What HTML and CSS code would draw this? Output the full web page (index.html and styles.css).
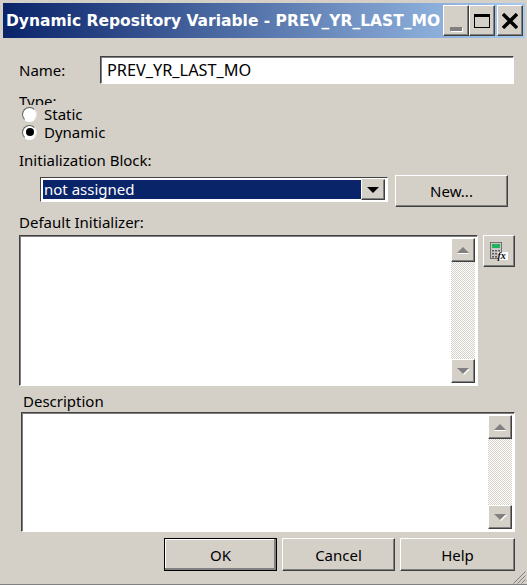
FILE: index.html
```html
<!DOCTYPE html>
<html lang="en">
<head>
  <meta charset="UTF-8" />
  <title>Dynamic Repository Variable</title>
  <link rel="stylesheet" href="styles.css">
</head>
<body>
  <div class="window">
    <div class="titlebar">
      <span class="title">Dynamic Repository Variable - PREV_YR_LAST_MO</span>
      <div class="win-buttons">
        <button class="win-btn"><span class="min-glyph"></span></button>
        <button class="win-btn"><span class="max-glyph"></span></button>
        <button class="win-btn win-close">
          <svg width="16" height="16" viewBox="0 0 16 16"><path d="M1 1 L15 15 M15 1 L1 15" stroke="#000" stroke-width="3.4" fill="none"/></svg>
        </button>
      </div>
    </div>

    <div class="content">
      <div class="name-row">
        <label for="varName">Name:</label>
        <input type="text" id="varName" class="name-input" value="PREV_YR_LAST_MO" />
      </div>

      <div class="type-label">Type:</div>
      <div class="radio-row"><span class="radio"></span>Static</div>
      <div class="radio-row"><span class="radio radio-on"></span>Dynamic</div>

      <div class="init-label">Initialization Block:</div>
      <div class="init-row">
        <div class="combo">
          <div class="combo-value">not assigned</div>
          <div class="combo-btn"><span class="combo-arrow"></span></div>
        </div>
        <button class="btn btn-new">New...</button>
      </div>

      <div class="default-label">Default Initializer:</div>
      <div class="default-row">
        <div class="textbox textbox-default">
          <div class="scrollbar">
            <div class="scroll-btn"><span class="arrow-up"></span></div>
            <div class="scroll-track"></div>
            <div class="scroll-btn"><span class="arrow-down"></span></div>
          </div>
        </div>
        <button class="btn btn-func">
          <svg width="20" height="20" viewBox="0 0 20 20">
            <rect x="1.500" y="1.500" width="11" height="16" fill="#c8c8c8" stroke="#707070"/>
            <rect x="3" y="3" width="8" height="4" fill="#22b35a"/>
            <path d="M3 9h2v1.500H3zM6 9h2v1.500H6zM9 9h2v1.500H9zM3 12h2v1.500H3zM6 12h2v1.500H6zM3 15h2v1.500H3zM6 15h2v1.500H6z" fill="#606060"/>
            <rect x="9" y="11" width="10" height="8" fill="#fff"/>
            <text x="8.500" y="17.500" class="fx-text">fx</text>
          </svg>
        </button>
      </div>

      <div class="desc-label">Description</div>
      <div class="textbox textbox-desc">
        <div class="scrollbar">
          <div class="scroll-btn"><span class="arrow-up"></span></div>
          <div class="scroll-track"></div>
          <div class="scroll-btn"><span class="arrow-down"></span></div>
        </div>
      </div>

      <div class="button-row">
        <button class="btn btn-ok">OK</button>
        <button class="btn btn-action">Cancel</button>
        <button class="btn btn-action btn-help">Help</button>
      </div>
    </div>

    <div class="statusline">
      <svg class="grip" width="14" height="14" viewBox="0 0 14 14">
        <path d="M13.500 1.500 L1.500 13.500 M13.500 5.500 L5.500 13.500 M13.500 9.500 L9.500 13.500" stroke="#808080" fill="none"/>
      </svg>
    </div>
  </div>
</body>
</html>
```

FILE: styles.css
```css
* {
  margin: 0;
  padding: 0;
  box-sizing: border-box;
  font-family: "Noto Sans", "Open Sans", sans-serif;
}

body {
  width: 527px;
  height: 585px;
  overflow: hidden;
  background-color: #d4d0c8;
  color: #000;
  font-size: 15px;
}

.window {
  display: flex;
  flex-direction: column;
  height: 585px;
  padding: 3px 2px 0 3px;
}

.titlebar {
  display: flex;
  justify-content: space-between;
  align-items: center;
  height: 35px;
  padding: 0 2px 0 3px;
  background: linear-gradient(to right, #0a246a, #a6caf0);
}

.title {
  font-family: "DejaVu Sans", sans-serif;
  font-weight: bold;
  font-size: 15.500px;
  color: #fff;
  white-space: nowrap;
}

.win-buttons {
  display: flex;
}

.win-btn {
  display: flex;
  align-items: center;
  justify-content: center;
  width: 26px;
  height: 31px;
  background-color: #d4d0c8;
  border: 1px solid;
  border-color: #fff #404040 #404040 #fff;
  box-shadow: inset -1px -1px 0 #808080;
}

.win-close {
  margin-left: 2px;
}

.min-glyph {
  width: 12px;
  height: 4px;
  margin-top: 16px;
  background-color: #808080;
  box-shadow: 1px 1px 0 #fff;
}

.max-glyph {
  width: 16px;
  height: 14px;
  border: 1px solid #000;
  border-top-width: 3px;
}

.content {
  padding-left: 16px;
  flex: 1;
}

.name-row {
  display: flex;
  align-items: center;
  margin-top: 18px;
}

.name-row label {
  width: 81px;
}

.name-input {
  width: 414px;
  height: 28px;
  padding: 0 6px;
  font-size: 16.300px;
  background-color: #fff;
  border: 1px solid;
  border-color: #404040 #fff #fff #404040;
  box-shadow: inset 1px 1px 0 #808080;
  outline: none;
}

.type-label {
  height: 14px;
  margin-top: 7px;
  line-height: 20px;
  overflow: hidden;
}

.radio-row {
  display: flex;
  align-items: center;
  height: 18px;
  padding-left: 3px;
}

.radio {
  position: relative;
  width: 15px;
  height: 15px;
  margin-right: 7px;
  background-color: #fff;
  border-radius: 50%;
  border: 1px solid;
  border-color: #606060 #e8e8e8 #fff #606060;
}

.radio-on::after {
  content: "";
  position: absolute;
  top: 2.500px;
  left: 2.500px;
  width: 8px;
  height: 8px;
  background-color: #000;
  border-radius: 50%;
}

.init-label {
  margin-top: 8px;
  line-height: 22px;
}

.init-row {
  display: flex;
  align-items: flex-start;
  margin-top: 4px;
  padding-left: 21px;
}

.combo {
  display: flex;
  width: 348px;
  height: 25px;
  margin-top: 2px;
  padding: 2px;
  background-color: #fff;
  border: 1px solid;
  border-color: #404040 #fff #fff #404040;
}

.combo-value {
  flex: 1;
  padding-left: 1px;
  line-height: 19px;
  color: #fff;
  background-color: #0a246a;
}

.combo-btn {
  display: flex;
  align-items: center;
  justify-content: center;
  width: 24px;
  margin-top: -1px;
  margin-bottom: -1px;
  background-color: #d4d0c8;
  border: 1px solid;
  border-color: #d4d0c8 #404040 #404040 #fff;
  box-shadow: inset -1px -1px 0 #808080;
}

.combo-arrow {
  border-left: 6px solid transparent;
  border-right: 6px solid transparent;
  border-top: 6px solid #000;
}

.btn {
  background-color: #d4d0c8;
  font-size: 15px;
  color: #000;
  border: 1px solid;
  border-color: #fff #404040 #404040 #fff;
  box-shadow: inset -1px -1px 0 #808080;
}

.btn-new {
  width: 113px;
  height: 32px;
  margin-left: 7px;
}

.default-label {
  margin-top: 4px;
  line-height: 22px;
}

.default-row {
  display: flex;
  align-items: flex-start;
  margin-top: 2px;
}

.textbox {
  display: flex;
  justify-content: flex-end;
  padding: 2px;
  background-color: #fff;
  border: 1px solid;
  border-color: #404040 #fff #fff #404040;
  box-shadow: inset 1px 1px 0 #808080;
}

.textbox-default {
  width: 459px;
  height: 151px;
}

.textbox-desc {
  width: 494px;
  height: 120px;
  margin-left: 2px;
}

.scrollbar {
  display: flex;
  flex-direction: column;
  width: 24px;
}

.scroll-btn {
  display: flex;
  align-items: center;
  justify-content: center;
  height: 24px;
  background-color: #d4d0c8;
  border: 1px solid;
  border-color: #fff #404040 #404040 #fff;
  box-shadow: inset -1px -1px 0 #808080;
}

.scroll-track {
  flex: 1;
  background: repeating-conic-gradient(#d4d0c8 0 25%, #fff 0 50%) 0 0 / 2px 2px;
}

.arrow-up {
  border-left: 6px solid transparent;
  border-right: 6px solid transparent;
  border-bottom: 6px solid #808080;
  filter: drop-shadow(0 1px 0 #fff);
}

.arrow-down {
  border-left: 6px solid transparent;
  border-right: 6px solid transparent;
  border-top: 6px solid #808080;
  filter: drop-shadow(1px 1px 0 #fff);
}

.btn-func {
  display: flex;
  align-items: center;
  justify-content: center;
  width: 32px;
  height: 32px;
  margin-left: 5px;
}

.fx-text {
  font-family: "Liberation Serif", serif;
  font-style: italic;
  font-weight: bold;
  font-size: 10px;
  fill: #000;
}

.desc-label {
  margin-top: 4px;
  margin-left: 4px;
  line-height: 22px;
}

.button-row {
  display: flex;
  margin-top: 6px;
  padding-left: 145px;
  gap: 5px;
}

.btn-ok {
  width: 113px;
  height: 33px;
  border: 1px solid #000;
  box-shadow: inset -2px -2px 0 #808080, inset 1px 1px 0 #fff;
}

.btn-action {
  width: 113px;
  height: 33px;
}

.btn-help {
  width: 115px;
}

.statusline {
  position: relative;
  height: 1px;
  margin: 0 -2px 0 -3px;
  background-color: #808080;
}

.grip {
  position: absolute;
  right: 1px;
  bottom: 1px;
}
```
